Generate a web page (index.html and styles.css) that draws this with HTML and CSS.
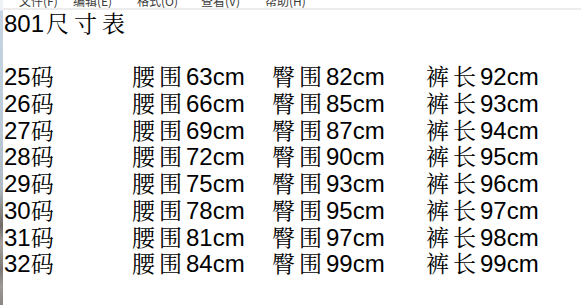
FILE: index.html
```html
<!DOCTYPE html>
<html lang="zh-CN">
<head>
<meta charset="utf-8">
<title>801尺寸表</title>
<link rel="stylesheet" href="styles.css">
</head>
<body>
<div class="window">
  <div class="frame"></div>
  <div class="main">
    <div class="menubar">
      <div class="menu-inner">
        <span class="menu-item first">文件(F)</span>
        <span class="menu-item">编辑(E)</span>
        <span class="menu-item">格式(O)</span>
        <span class="menu-item">查看(V)</span>
        <span class="menu-item">帮助(H)</span>
      </div>
    </div>
    <div class="separator"></div>
    <div class="editor">
      <div class="line">801<span class="cj title-cj">尺寸表</span></div>
      <div class="line"></div>
      <div class="row"><div>25<span class="cj">码</span></div><div><span class="cj">腰围</span>63cm</div><div><span class="cj">臀围</span>82cm</div><div><span class="cj">裤长</span>92cm</div></div>
      <div class="row"><div>26<span class="cj">码</span></div><div><span class="cj">腰围</span>66cm</div><div><span class="cj">臀围</span>85cm</div><div><span class="cj">裤长</span>93cm</div></div>
      <div class="row"><div>27<span class="cj">码</span></div><div><span class="cj">腰围</span>69cm</div><div><span class="cj">臀围</span>87cm</div><div><span class="cj">裤长</span>94cm</div></div>
      <div class="row"><div>28<span class="cj">码</span></div><div><span class="cj">腰围</span>72cm</div><div><span class="cj">臀围</span>90cm</div><div><span class="cj">裤长</span>95cm</div></div>
      <div class="row"><div>29<span class="cj">码</span></div><div><span class="cj">腰围</span>75cm</div><div><span class="cj">臀围</span>93cm</div><div><span class="cj">裤长</span>96cm</div></div>
      <div class="row"><div>30<span class="cj">码</span></div><div><span class="cj">腰围</span>78cm</div><div><span class="cj">臀围</span>95cm</div><div><span class="cj">裤长</span>97cm</div></div>
      <div class="row"><div>31<span class="cj">码</span></div><div><span class="cj">腰围</span>81cm</div><div><span class="cj">臀围</span>97cm</div><div><span class="cj">裤长</span>98cm</div></div>
      <div class="row"><div>32<span class="cj">码</span></div><div><span class="cj">腰围</span>84cm</div><div><span class="cj">臀围</span>99cm</div><div><span class="cj">裤长</span>99cm</div></div>
    </div>
  </div>
</div>
</body>
</html>
```

FILE: styles.css
```css
html, body {
  margin: 0;
  padding: 0;
  background: #ffffff;
}

.window {
  display: flex;
  width: 581px;
  height: 305px;
  overflow: hidden;
}

.frame {
  flex: 0 0 3px;
  background: linear-gradient(to bottom,
    #eef2f6 0px, #eef2f6 10px,
    #c6d5e4 11px, #bccbd9 40%,
    #aebac4 62%, #8e8c8a 68%,
    #6f6a68 74%, #a8a5a2 80%,
    #7d7874 88%, #9d9996 94%, #8a8581 100%);
}

.main {
  flex: 1 1 auto;
  display: flex;
  flex-direction: column;
  min-width: 0;
}

.menubar {
  height: 8px;
  overflow: hidden;
  background: #ffffff;
}

.menu-inner {
  display: flex;
  padding-left: 16px;
  margin-top: -5px;
  font-family: "Noto Sans CJK SC", "Noto Sans", sans-serif;
  font-size: 12px;
  line-height: 12px;
  color: #3c3c3c;
  white-space: nowrap;
}

.menu-item {
  flex: 0 0 64px;
}

.menu-item.first {
  flex-basis: 54px;
}

.separator {
  height: 2px;
  background: #ececec;
}

.editor {
  padding: 1px 0 0 1px;
  font-family: "Liberation Sans", "Noto Serif CJK SC", "Noto Sans CJK SC", sans-serif;
  font-size: 24px;
  line-height: 26.7px;
  color: #000000;
  white-space: nowrap;
}

.line {
  height: 26.7px;
}

.row {
  display: grid;
  grid-template-columns: 128px 140px 154px 1fr;
  height: 26.7px;
}

.cj {
  font-size: 23px;
  letter-spacing: 4px;
}

.title-cj {
  margin-left: 2px;
  letter-spacing: 5px;
}
```
